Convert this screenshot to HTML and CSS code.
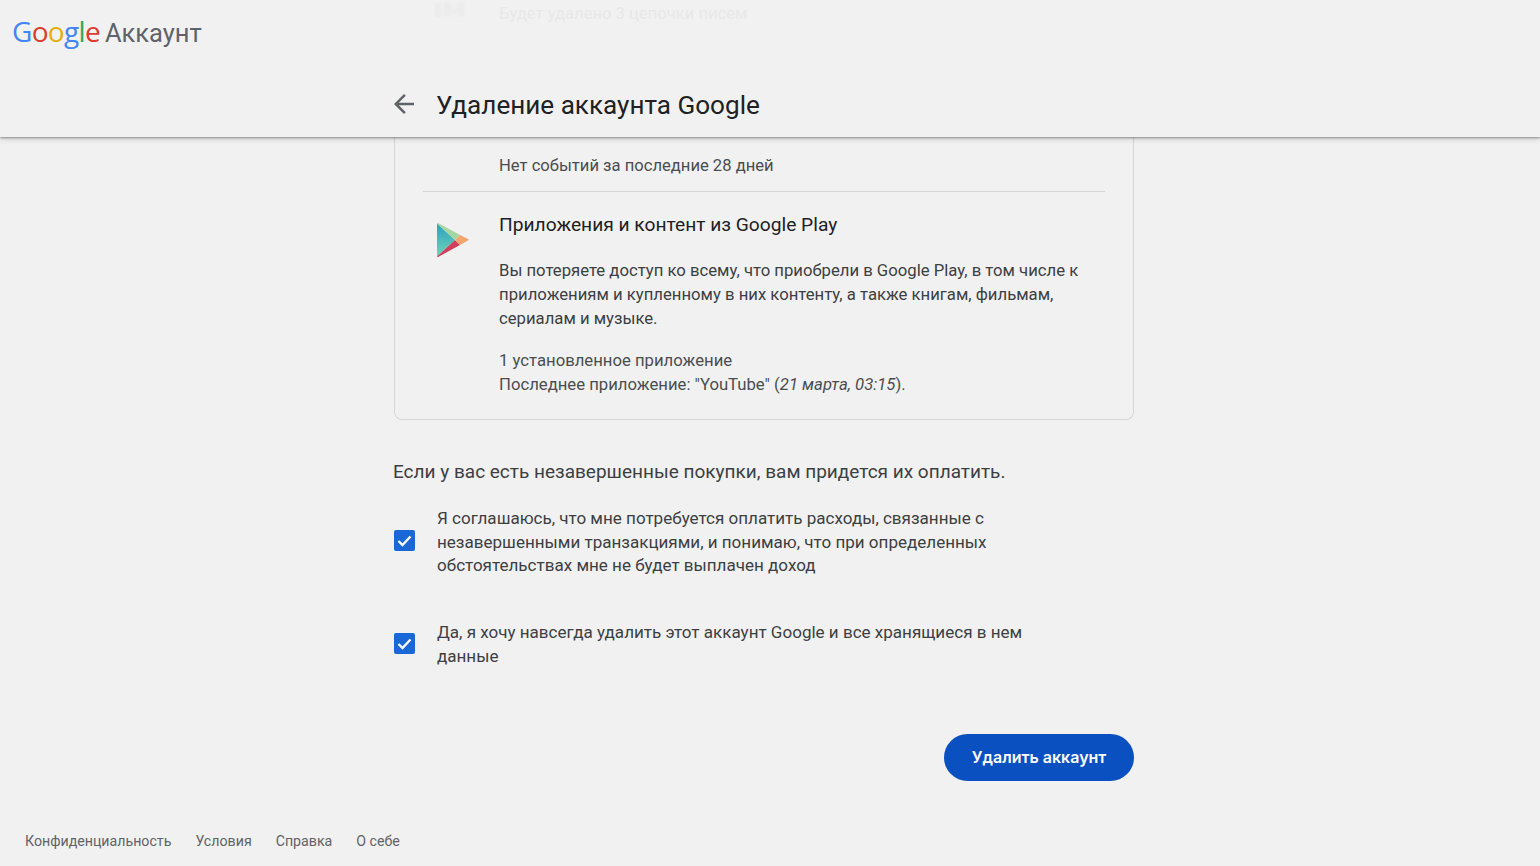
FILE: index.html
```html
<!DOCTYPE html>
<html lang="ru">
<head>
    <meta charset="UTF-8">
    <meta name="viewport" content="width=device-width, initial-scale=1.0">
    <title>Удаление аккаунта Google</title>
    <link rel="stylesheet" href="styles.css">
</head>
<body>
    <header class="topbar">
        <div class="ghost-row">
            <svg class="ghost-icon" width="40" height="20" viewBox="0 0 40 20"><path d="M1 0h6v14h-6zM10 0h6l4 8 4-8h6v14h-6v-6l-4 6-4-6v6h-6z" fill="#ececec"/></svg>
            <span class="ghost-text">Будет удалено 3 цепочки писем</span>
        </div>
        <div class="brand">
            <span class="logo"><span class="c-blue">G</span><span class="c-red">o</span><span class="c-yellow">o</span><span class="c-blue">g</span><span class="c-green">l</span><span class="c-red">e</span></span>
            <span class="brand-name">Аккаунт</span>
        </div>
        <div class="title-row">
            <svg class="back" width="30" height="30" viewBox="0 0 24 24"><path d="M20 11H7.830l5.590-5.590L12 4l-8 8 8 8 1.410-1.410L7.830 13H20z" fill="#5f6368"/></svg>
            <h1>Удаление аккаунта Google</h1>
        </div>
    </header>

    <main class="content">
        <section class="card">
            <div class="card-row first">
                <p class="muted events">Нет событий за последние 28 дней</p>
            </div>
            <div class="card-row play">
                <svg class="play-icon" width="36" height="38" viewBox="0 0 36 38">
                    <defs>
                        <linearGradient id="pg" x1="0" y1="0" x2="0" y2="1">
                            <stop offset="0" stop-color="#2b9fc4"/>
                            <stop offset="1" stop-color="#6fd6b4"/>
                        </linearGradient>
                    </defs>
                    <path d="M1 2.500L19 19 1 35.500z" fill="url(#pg)"/>
                    <path d="M1 2.500c.5-.7 1.200-.7 2 0L24 14 19 19z" fill="#a5d6a0"/>
                    <path d="M1 35.500c.5.7 1.200.7 2 0L24 24 19 19z" fill="#d23f5e"/>
                    <path d="M24 14l8 4c.8.400.8 1.200 0 1.600l-8 4.400L19 19z" fill="#f2a56e"/>
                </svg>
                <div class="play-body">
                    <h2>Приложения и контент из Google Play</h2>
                    <p class="desc">Вы потеряете доступ ко всему, что приобрели в Google Play, в том числе к приложениям и купленному в них контенту, а также книгам, фильмам, сериалам и музыке.</p>
                    <p class="muted installed">1 установленное приложение<br>Последнее приложение: "YouTube" (<em>21 марта, 03:15</em>).</p>
                </div>
            </div>
        </section>

        <p class="notice">Если у вас есть незавершенные покупки, вам придется их оплатить.</p>

        <label class="check first-check">
            <span class="box"><svg width="21" height="21" viewBox="0 0 21 21"><path d="M4.500 11l4 4 8-8.500" fill="none" stroke="#fff" stroke-width="2.400"/></svg></span>
            <span class="check-text">Я соглашаюсь, что мне потребуется оплатить расходы, связанные с незавершенными транзакциями, и понимаю, что при определенных обстоятельствах мне не будет выплачен доход</span>
        </label>
        <label class="check second-check">
            <span class="box"><svg width="21" height="21" viewBox="0 0 21 21"><path d="M4.500 11l4 4 8-8.500" fill="none" stroke="#fff" stroke-width="2.400"/></svg></span>
            <span class="check-text">Да, я хочу навсегда удалить этот аккаунт Google и все хранящиеся в нем данные</span>
        </label>

        <div class="actions">
            <button class="delete-btn">Удалить аккаунт</button>
        </div>
    </main>

    <footer class="footer">
        <a>Конфиденциальность</a>
        <a>Условия</a>
        <a>Справка</a>
        <a>О себе</a>
    </footer>
</body>
</html>
```

FILE: styles.css
```css
html, body {
    margin: 0;
    height: 100%;
}
body {
    background-color: #f1f1f1;
    font-family: Roboto, "Liberation Sans", sans-serif;
    color: #3c4043;
    overflow: hidden;
}
p, h1, h2 {
    margin: 0;
}
.topbar {
    position: relative;
    height: 137px;
    box-sizing: border-box;
    padding-top: 12px;
    box-shadow: 0 1px 2px rgba(0,0,0,0.35), 0 2px 6px rgba(0,0,0,0.15);
}
.ghost-row {
    position: absolute;
    left: 434px;
    top: 0;
    display: flex;
    gap: 25px;
    align-items: flex-end;
    height: 23px;
}
.ghost-icon {
    filter: blur(1px);
}
.ghost-text {
    font-size: 16.6px;
    color: #e8e8e8;
}
.brand {
    display: flex;
    align-items: baseline;
    padding-left: 12px;
    gap: 5px;
    height: 38px;
}
.logo {
    font-family: "Open Sans", sans-serif;
    font-size: 28px;
    font-weight: 500;
    letter-spacing: -0.7px;
}
.c-blue { color: #4285f4; }
.c-red { color: #db3c30; }
.c-yellow { color: #e3ae0f; }
.c-green { color: #34a853; }
.brand-name {
    font-size: 25.5px;
    color: #5f6368;
}
.title-row {
    display: flex;
    align-items: center;
    gap: 17px;
    margin: 39px 0 0 389px;
}
.back {
    margin-bottom: 1px;
}
h1 {
    font-size: 26.1px;
    font-weight: 400;
    color: #202124;
}
.content {
    width: 740px;
    margin-left: 394px;
}
.card {
    border: 1px solid #d4d6d8;
    border-top: none;
    border-radius: 0 0 8px 8px;
    padding: 0 28px 22px 28px;
}
.muted {
    line-height: 24px;
    color: #4a4d50;
}
.events {
    font-size: 16.6px;
}
.installed {
    font-size: 16.7px;
}
.card-row.first {
    padding: 17px 0 13px 76px;
    border-bottom: 1px solid #d4d6d8;
}
.card-row.play {
    display: flex;
    padding: 21px 0 0 13px;
}
.play-icon {
    flex: none;
    margin: 8px 27px 0 0;
}
.play-body {
    flex: 1;
}
h2 {
    font-size: 19.2px;
    font-weight: 400;
    line-height: 24px;
    color: #202124;
}
.desc {
    margin: 22px 0 18px;
    font-size: 16.7px;
    line-height: 24px;
    color: #3c4043;
}
.notice {
    margin: 40px 0 0 -1px;
    font-size: 19px;
    line-height: 24px;
    color: #3c4043;
}
.check {
    display: flex;
    align-items: center;
    gap: 22px;
    width: 640px;
}
.first-check {
    margin-top: 23px;
}
.second-check {
    margin-top: 43.5px;
}
.box {
    flex: none;
    width: 21px;
    height: 21px;
    margin-bottom: 3px;
    border-radius: 2px;
    background-color: #1a67d8;
    display: flex;
}
.check-text {
    font-size: 17.05px;
    line-height: 23.5px;
    color: #3c4043;
}
.actions {
    display: flex;
    justify-content: flex-end;
    margin-top: 66px;
}
.delete-btn {
    width: 190px;
    height: 47px;
    padding: 0 0 2px;
    border: none;
    border-radius: 24px;
    background-color: #0b50c0;
    color: #fff;
    font-family: Inter, Roboto, sans-serif;
    font-size: 16px;
    font-weight: 600;
}
.footer {
    display: flex;
    gap: 24px;
    margin: 50px 0 0 25px;
    font-size: 14.2px;
    line-height: 20px;
    color: #5f6368;
}
```
